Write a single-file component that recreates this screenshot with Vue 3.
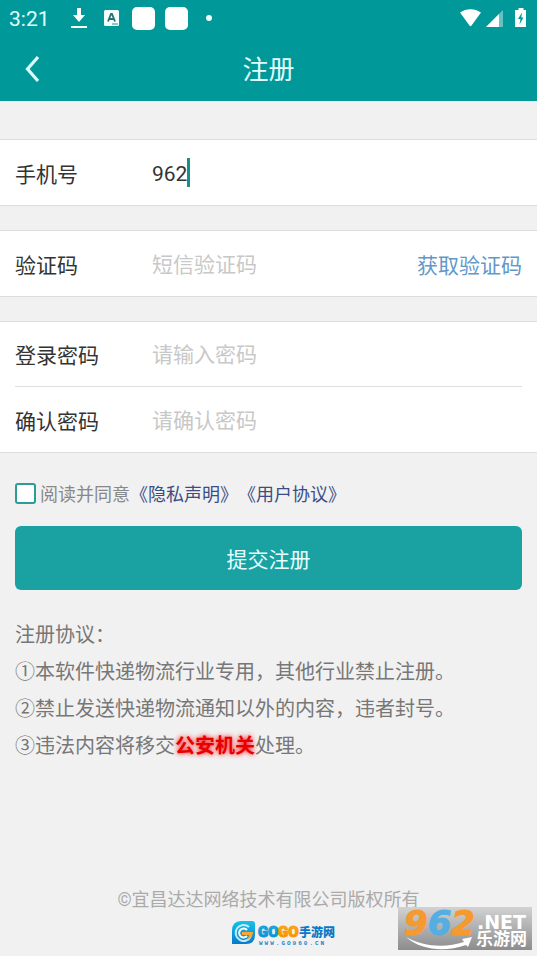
<script setup>
import { ref } from 'vue'

const phone = ref('962')
const code = ref('')
const password = ref('')
const confirmPassword = ref('')
const agreed = ref(false)
</script>

<template>
  <div class="page" lang="zh-CN">
    <header class="top">
      <div class="status">
        <span class="clock">3:21</span>
        <svg class="st-download" width="16" height="22" viewBox="0 0 16 22" aria-hidden="true">
          <path d="M6 1h4v7h4l-6 7-6-7h4z" fill="#fff" />
          <path d="M0 19h16v2H0z" fill="#fff" />
        </svg>
        <svg class="st-a" width="15" height="16" viewBox="0 0 15 16" aria-hidden="true">
          <rect width="15" height="16" rx="1.5" fill="#f4ffff" />
          <path d="M4 11.5 7 4h1l3 7.5M5 9h5" fill="none" stroke="#2c6f70" stroke-width="1.8" />
          <path d="M8 14h6" stroke="#2c8f90" stroke-width="1" />
        </svg>
        <span class="app-square"></span>
        <span class="app-square"></span>
        <span class="dot"></span>
        <svg class="st-right" width="68" height="22" viewBox="0 0 68 22" aria-hidden="true">
          <path d="M1 5.500C7 1 16 1 22 5.500L12.500 18.500Q11.500 20 10.500 18.500Z" fill="#fff" />
          <path d="M44 3v17H27z" fill="#fff" fill-opacity=".4" />
          <path d="M40 7v13H27z" fill="#fff" />
          <path d="M59.500 1h5v2h2.500v17H56V3h3.500z" fill="#fff" />
          <path d="M63 5.500 59 12h2.500L60.500 17.500 64.500 10.500H62.300z" fill="#009899" />
        </svg>
      </div>
      <div class="nav">
        <button class="back" type="button" aria-label="返回">
          <svg width="16" height="28" viewBox="0 0 16 28" aria-hidden="true">
            <path d="M14 2 3.500 14 14 26" fill="none" stroke="#dcffff" stroke-width="3.200" />
          </svg>
        </button>
        <h1>注册</h1>
      </div>
    </header>

    <form class="form" @submit.prevent>
      <section class="group">
        <div class="row">
          <label for="phone">手机号</label>
          <div class="field">
            <input id="phone" v-model="phone" type="tel" />
            <span class="caret" :style="{ left: phone.length + 'ch' }"></span>
          </div>
        </div>
      </section>

      <section class="group">
        <div class="row">
          <label for="code">验证码</label>
          <div class="field">
            <input id="code" v-model="code" type="text" placeholder="短信验证码" />
          </div>
          <button class="get-code" type="button">获取验证码</button>
        </div>
      </section>

      <section class="group">
        <div class="row">
          <label for="password">登录密码</label>
          <div class="field">
            <input id="password" v-model="password" type="password" placeholder="请输入密码" />
          </div>
        </div>
        <div class="row">
          <label for="confirm">确认密码</label>
          <div class="field">
            <input id="confirm" v-model="confirmPassword" type="password" placeholder="请确认密码" />
          </div>
        </div>
      </section>

      <div class="agree">
        <input id="agree" v-model="agreed" type="checkbox" />
        <label for="agree">阅读并同意</label>
        <a href="#privacy">《隐私声明》</a>
        <a href="#terms">《用户协议》</a>
      </div>

      <button class="submit" type="submit">提交注册</button>
    </form>

    <section class="terms">
      <p>注册协议：</p>
      <p>①本软件快递物流行业专用，其他行业禁止注册。</p>
      <p>②禁止发送快递物流通知以外的内容，违者封号。</p>
      <p>③违法内容将移交<strong>公安机关</strong>处理。</p>
    </section>

    <footer>
      <p class="copyright">©宜昌达达网络技术有限公司版权所有</p>
      <svg class="gogo" width="104" height="28" viewBox="0 0 104 28" role="img" aria-label="GOGO手游网">
        <defs>
          <linearGradient id="gogo-blue" x1="0" y1="0" x2="0" y2="1">
            <stop offset="0" stop-color="#16c3ea" />
            <stop offset="1" stop-color="#0879ca" />
          </linearGradient>
          <linearGradient id="gogo-orange" x1="0" y1="0" x2="0" y2="1">
            <stop offset="0" stop-color="#ffb70d" />
            <stop offset="1" stop-color="#f58300" />
          </linearGradient>
        </defs>
        <path d="M10 1h11q3 0 3 3v11q0 9-9 9H1V11Q1 1 10 1z" fill="url(#gogo-blue)" />
        <path d="M18 7a8 8 0 1 0 2 9" fill="none" stroke="#bfeefa" stroke-width="2" />
        <path d="M16 10a4.500 4.500 0 1 0 0 6" fill="none" stroke="#fff" stroke-width="2" />
        <path d="M11 12h11c0 5-4 8-8 8 3-1 4-3 4-5h-7z" fill="#f8a634" />
        <text x="27" y="17" class="gogo-word" fill="url(#gogo-blue)" stroke="#0f9bd8">GO</text>
        <text x="47" y="17" class="gogo-word" fill="url(#gogo-orange)" stroke="#fa9a06">GO</text>
        <text x="68" y="17" class="gogo-cn" fill="#0879c8">手游网</text>
        <text x="28" y="25" class="gogo-url" fill="#1686c8">WWW.GO960.CN</text>
      </svg>
      <svg class="watermark" width="134" height="51" viewBox="0 -8 134 51" role="img" aria-label="962.NET 乐游网">
        <defs>
          <linearGradient id="mark-bg" x1="0" y1="0" x2="0" y2="1">
            <stop offset="0" stop-color="#d2d2d2" />
            <stop offset="1" stop-color="#8c8c8c" />
          </linearGradient>
        </defs>
        <rect width="134" height="43" fill="url(#mark-bg)" />
        <text x="6" y="28" class="mark-digits">
          <tspan fill="#f59a2f" stroke="#f59a2f">9</tspan><tspan fill="#55aee2" stroke="#55aee2">6</tspan><tspan fill="#f59a2f" stroke="#f59a2f">2</tspan>
        </text>
        <text x="79" y="22" class="mark-net">.NET</text>
        <text x="78" y="38" class="mark-cn">乐游网</text>
        <path d="M8 30C25 40 48 41 66 35l-2-3 10-2-4 10-2-2C48 45 24 44 8 30z" fill="#fff" />
      </svg>
    </footer>
  </div>
</template>

<style>
body {
  margin: 0;
  background: #f1f1f1;
}
</style>

<style scoped>
.page {
  display: flex;
  flex-direction: column;
  min-height: 100vh;
  background: #f1f1f1;
  color: #333;
  font-family: Roboto, "Noto Sans CJK SC", sans-serif;
  font-size: 21px;
}

h1,
p {
  margin: 0;
  font-weight: 400;
}

button,
input {
  font: inherit;
  color: inherit;
  border: 0;
  padding: 0;
  margin: 0;
  background: none;
}

.top {
  background: #009899;
  color: #e2ffff;
}

.status {
  display: flex;
  align-items: center;
  height: 36px;
  padding: 0 10px 0 9px;
}

.clock {
  width: 62px;
  padding-top: 2px;
  font-size: 21px;
}

.st-a {
  margin: 0 13px 0 17px;
}

.app-square {
  width: 23px;
  height: 23px;
  margin-right: 10px;
  border-radius: 5px;
  background: #fff;
}

.dot {
  width: 6px;
  height: 6px;
  margin-left: 8px;
  border-radius: 50%;
  background: #eff;
}

.st-right {
  margin-left: auto;
}

.nav {
  display: grid;
  grid-template-columns: 64px 1fr 64px;
  align-items: center;
  height: 65px;
}

.back {
  display: flex;
  justify-content: center;
  align-items: center;
  height: 64px;
}

h1 {
  padding-top: 3px;
  text-align: center;
  font-size: 26px;
  line-height: 36px;
}

.form {
  display: flex;
  flex-direction: column;
  padding-top: 38px;
}

.group {
  margin-bottom: 24px;
  padding: 0 15px;
  background: #fff;
  border-top: 1px solid #ddd;
  border-bottom: 1px solid #ddd;
}

.row {
  display: flex;
  align-items: center;
  box-sizing: border-box;
  height: 65px;
}

.row:not(:last-child) {
  border-bottom: 1px solid #ddd;
}

.row label {
  width: 137px;
}

.field {
  position: relative;
  flex: 1;
  min-width: 0;
  padding-top: 2px;
}

.field input {
  display: block;
  width: 100%;
  height: 32px;
  outline: none;
}

.field input::placeholder {
  color: #c8c8c8;
  opacity: 1;
}

.caret {
  position: absolute;
  top: 2px;
  width: 3px;
  height: 29px;
  background: #179085;
}

.get-code {
  color: #6298c8;
}

.agree {
  display: flex;
  align-items: center;
  height: 32px;
  padding: 0 15px;
  font-size: 18px;
  color: #888;
}

.agree input {
  appearance: none;
  box-sizing: border-box;
  width: 21px;
  height: 21px;
  margin-right: 4px;
  border: 2px solid #2a9d98;
  border-radius: 3px;
  background: #fff;
}

.agree a {
  color: #3b4d85;
  text-decoration: none;
}

.submit {
  height: 64px;
  margin: 17px 15px 0;
  border-radius: 6px;
  background: #1aa2a3;
  color: #e8ffff;
}

.terms {
  padding: 27px 15px 0;
  font-size: 20px;
  line-height: 37px;
  color: #777;
}

.terms strong {
  font-weight: 700;
  color: #e60000;
  text-shadow: 0 0 5px #f00;
}

footer {
  position: relative;
  margin-top: auto;
  padding-bottom: 8px;
  text-align: center;
}

.copyright {
  font-size: 18px;
  line-height: 28px;
  color: #aaa;
}

.gogo {
  display: block;
  margin: 6px auto 0;
  padding-left: 28px;
}

.gogo-word {
  font-family: Roboto, sans-serif;
  font-size: 15px;
  font-weight: 900;
  stroke-width: 1px;
}

.gogo-cn {
  font-family: "Noto Sans CJK SC", sans-serif;
  font-size: 12px;
  font-weight: 900;
}

.gogo-url {
  font-family: "Liberation Mono", monospace;
  font-size: 6px;
  font-weight: 700;
  letter-spacing: 2px;
}

.watermark {
  position: absolute;
  right: 5px;
  bottom: 6px;
}

.mark-digits {
  font-family: "DejaVu Sans", sans-serif;
  font-size: 34px;
  font-weight: 700;
  font-style: oblique;
  stroke-width: 1px;
}

.mark-net {
  font-family: "DejaVu Sans", sans-serif;
  font-size: 19px;
  font-weight: 700;
  fill: #fff;
}

.mark-cn {
  font-family: "Noto Sans CJK SC", sans-serif;
  font-size: 17px;
  font-weight: 700;
  fill: #fff;
}
</style>
